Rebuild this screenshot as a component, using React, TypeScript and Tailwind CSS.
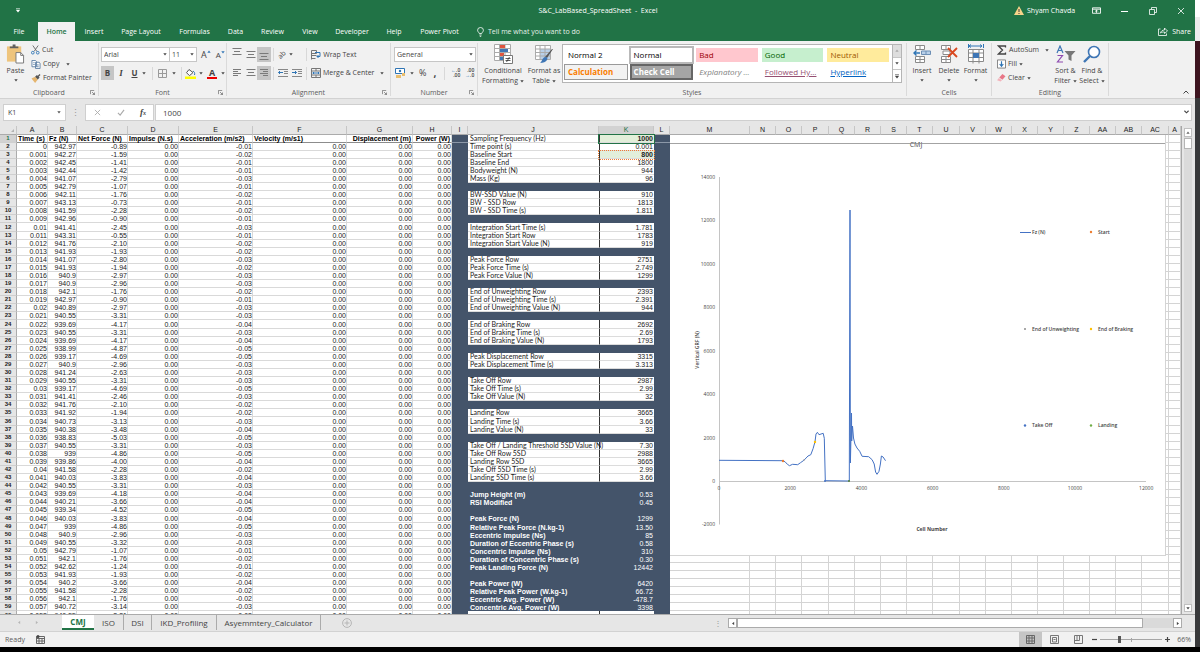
import type { ReactNode } from 'react';

const menuTabs = ['File', 'Home', 'Insert', 'Page Layout', 'Formulas', 'Data', 'Review', 'View', 'Developer', 'Help', 'Power Pivot'];
const tabWidths = ['w-[38px]', 'w-[37px]', 'w-[38px]', 'w-[56px]', 'w-[51px]', 'w-[31px]', 'w-[43px]', 'w-[32px]', 'w-[52px]', 'w-[32px]', 'w-[59px]'];

const sheetTabs = ['ISO', 'DSI', 'IKD_Profiling', 'Asyemmtery_Calculator'];
const sheetTabWidths = ['w-[30px]', 'w-[28px]', 'w-[65px]', 'w-[104px]'];

const columns = [
  ['A', 'w-[31px]'], ['B', 'w-[29px]'], ['C', 'w-[51px]'], ['D', 'w-[51px]'], ['E', 'w-[74px]'], ['F', 'w-[94px]'],
  ['G', 'w-[66px]'], ['H', 'w-[39px]'], ['I', 'w-[16px]'], ['J', 'w-[131px]'], ['K', 'w-[55px]'], ['L', 'w-[16px]'],
  ['M', 'w-[80px]'], ['N', 'w-[26px]'], ['O', 'w-[26px]'], ['P', 'w-[27px]'], ['Q', 'w-[26px]'], ['R', 'w-[26px]'],
  ['S', 'w-[26px]'], ['T', 'w-[26px]'], ['U', 'w-[27px]'], ['V', 'w-[26px]'], ['W', 'w-[26px]'], ['X', 'w-[26px]'],
  ['Y', 'w-[26px]'], ['Z', 'w-[26px]'], ['AA', 'w-[26px]'], ['AB', 'w-[26px]'], ['AC', 'w-[27px]'], ['A', 'w-auto'],
];
const emptyColumns = columns.slice(12).map((c, i) => c[0] + i);

// [Fz, net force] per sample
const samples: [number, number][] = [
  [942.97, -0.89], [942.27, -1.59], [942.45, -1.41], [942.44, -1.42], [941.07, -2.79], [942.79, -1.07],
  [942.11, -1.76], [943.13, -0.73], [941.59, -2.28], [942.96, -0.9], [941.41, -2.45], [943.31, -0.55],
  [941.76, -2.1], [941.93, -1.93], [941.07, -2.8], [941.93, -1.94], [940.9, -2.97], [940.9, -2.96],
  [942.1, -1.76], [942.97, -0.9], [940.89, -2.97], [940.55, -3.31], [939.69, -4.17], [940.55, -3.31],
  [939.69, -4.17], [938.99, -4.87], [939.17, -4.69], [940.9, -2.96], [941.24, -2.63], [940.55, -3.31],
  [939.17, -4.69], [941.41, -2.46], [941.76, -2.1], [941.92, -1.94], [940.73, -3.13], [940.38, -3.48],
  [938.83, -5.03], [940.55, -3.31], [939, -4.86], [939.86, -4], [941.58, -2.28], [940.03, -3.83],
  [940.55, -3.31], [939.69, -4.18], [940.21, -3.66], [939.34, -4.52], [940.03, -3.83], [939, -4.86],
  [940.9, -2.96], [940.55, -3.32], [942.79, -1.07], [942.1, -1.76], [942.62, -1.24], [941.93, -1.93],
  [940.2, -3.66], [941.58, -2.28], [942.1, -1.76], [940.72, -3.14], [940.55, -3.31],
];
const MASS = 96;

const headers = ['Time (s)', 'Fz (N)', 'Net Force (N)', 'Impulse (N.s)', 'Acceleration (m/s2)', 'Velocity (m/s1)', 'Displacement (m)', 'Power (W)'];

const summary: Record<number, [string, string]> = {
  1: ['Sampling Frequency (Hz)', '1000'],
  2: ['Time point (s)', '0.001'],
  3: ['Baseline Start', '800'],
  4: ['Baseline End', '1800'],
  5: ['Bodyweight (N)', '944'],
  6: ['Mass (Kg)', '96'],
  8: ['BW-SSD Value (N)', '910'],
  9: ['BW - SSD Row', '1813'],
  10: ['BW - SSD Time (s)', '1.811'],
  12: ['Integration Start Time (s)', '1.781'],
  13: ['Integration Start Row', '1783'],
  14: ['Integration Start Value (N)', '919'],
  16: ['Peak Force Row', '2751'],
  17: ['Peak Force Time (s)', '2.749'],
  18: ['Peak Force Value (N)', '1299'],
  20: ['End of Unweighting Row', '2393'],
  21: ['End of Unweighting Time (s)', '2.391'],
  22: ['End of Unweighting Value (N)', '944'],
  24: ['End of Braking Row', '2692'],
  25: ['End of Braking Time (s)', '2.69'],
  26: ['End of Braking Value (N)', '1793'],
  28: ['Peak Displacement Row', '3315'],
  29: ['Peak Displacement Time (s)', '3.313'],
  31: ['Take Off Row', '2987'],
  32: ['Take Off Time (s)', '2.99'],
  33: ['Take Off Value (N)', '32'],
  35: ['Landing Row', '3665'],
  36: ['Landing Time (s)', '3.66'],
  37: ['Landing Value (N)', '33'],
  39: ['Take Off / Landing Threshold 5SD Value (N)', '7.30'],
  40: ['Take Off Row 5SD', '2988'],
  41: ['Landing Row 5SD', '3665'],
  42: ['Take Off 5SD Time (s)', '2.99'],
  43: ['Landing 5SD Time (s)', '3.66'],
  45: ['Jump Height (m)', '0.53'],
  46: ['RSI Modified', '0.45'],
  48: ['Peak Force (N)', '1299'],
  49: ['Relative Peak Force (N.kg-1)', '13.50'],
  50: ['Eccentric Impulse (Ns)', '85'],
  51: ['Duration of Eccentric Phase (s)', '0.58'],
  52: ['Concentric Impulse (Ns)', '310'],
  53: ['Duration of Concentric Phase (s)', '0.30'],
  54: ['Peak Landing Force (N)', '12442'],
  56: ['Peak Power (W)', '6420'],
  57: ['Relative Peak Power (W.kg-1)', '66.72'],
  58: ['Eccentric Avg. Power (W)', '-478.7'],
  59: ['Concentric Avg. Power (W)', '3398'],
  60: ['', ''],
};

function Caret({ className = '' }: { className?: string }) {
  return (
    <svg viewBox="0 0 6 4" className={`w-[4px] h-[3px] shrink-0 ${className}`} fill="currentColor">
      <path d="M.5 0h5L3 3.500z" />
    </svg>
  );
}

function Group({ label, className, launcher, children }: { label: string, className: string, launcher?: boolean, children: ReactNode }) {
  return (
    <section className={`flex flex-col shrink-0 border-r border-[#dadada] ${className}`}>
      <div className="h-[44px] flex">{children}</div>
      <div className="relative h-[9px] text-center text-[#5c5c5c] leading-[11px]">
        {label}
        {launcher && (
          <button aria-label={`${label} settings`} className="absolute right-[3px] top-[3px]">
            <svg viewBox="0 0 6 6" className="w-[5px] h-[5px]" fill="none" stroke="#777">
              <path d="M.5 5V.5H5M2.500 2.500l3 3M5.500 3v2.500H3" />
            </svg>
          </button>
        )}
      </div>
    </section>
  );
}

function BigButton({ icon, lines, caret = 'below', className }: { icon: ReactNode, lines: string[], caret?: 'below' | 'inline', className: string }) {
  return (
    <button className={`flex flex-col items-center shrink-0 pt-px ${className}`}>
      <span className="h-[20px] mb-[2px] flex items-center">{icon}</span>
      {lines.map((line, i) => (
        <span key={line} className="flex items-center gap-[2px] leading-[10px] whitespace-nowrap">
          {line}
          {caret === 'inline' && i === lines.length - 1 && <Caret />}
        </span>
      ))}
      {caret === 'below' && <Caret className="mt-[3px]" />}
    </button>
  );
}

function Lines({ widths, top = 2 }: { widths: number[], top?: number }) {
  return (
    <svg viewBox="0 0 10 12" className="w-[10px] h-[12px]" stroke="#7a7a7a">
      {widths.map((w, i) => <path key={i} d={`M${(10 - w) / 2} ${top + i * 3 + 0.5}h${w}`} />)}
    </svg>
  );
}

function SideLines({ right }: { right?: boolean }) {
  return (
    <svg viewBox="0 0 10 10" className="w-[10px] h-[10px]" stroke="#7a7a7a">
      <path d={right ? 'M1 1.500h8M4 3.500h5M1 5.500h8M4 7.500h5' : 'M1 1.500h8M1 3.500h5M1 5.500h8M1 7.500h5'} />
    </svg>
  );
}

function Indent({ out }: { out?: boolean }) {
  return (
    <svg viewBox="0 0 10 10" className="w-[10px] h-[10px]" fill="none">
      <path d="M0 1.500h10M6 3.500h4M6 5.500h4M0 8.500h10" stroke="#888" />
      <path d={out ? 'M5 4.500H.5M2 3L.5 4.500 2 6' : 'M0 4.500h4.500M3 3L4.500 4.500 3 6'} stroke="#2f75b5" />
    </svg>
  );
}

function TitleBar() {
  return (
    <header className="bg-[#217346] text-white">
      <div className="h-[21px] flex items-center">
        <button aria-label="Customize Quick Access Toolbar" className="ml-[16px] w-[5px]">
          <svg viewBox="0 0 5 5" className="w-[4px] h-[5px]"><path d="M0 0h5v1H0zM0 2h5L2.500 5z" fill="#fff" /></svg>
        </button>
        <h1 className="flex-1 text-center font-normal whitespace-pre">S&amp;C_LabBased_SpreadSheet  -  Excel</h1>
        <div className="flex items-center -ml-[161px]">
          <svg viewBox="0 0 10 9" className="w-[10px] h-[9px]">
            <path d="M5 0l5 9H0z" fill="#f8d48a" />
            <path d="M5 3v3M5 7v1" stroke="#3b3b3b" />
          </svg>
          <span className="ml-[3px] w-[50px] whitespace-nowrap">Shyam Chavda</span>
          <button aria-label="Ribbon display options" className="ml-[15px]">
            <svg viewBox="0 0 10 8" className="w-[9px] h-[8px]" fill="none" stroke="#fff">
              <path d="M.5.5h9v6h-9zM.5 2h9M5 6V3M3.500 4.500L5 3l1.500 1.500" />
            </svg>
          </button>
          <button aria-label="Minimize" className="ml-[19px] w-[9px]">
            <svg viewBox="0 0 8 8" className="w-[8px] h-[8px]"><path d="M1 4.500h7" stroke="#fff" /></svg>
          </button>
          <button aria-label="Restore" className="ml-[20px]">
            <svg viewBox="0 0 8 8" className="w-[8px] h-[8px]" fill="none" stroke="#fff" strokeWidth="0.800"><path d="M.5 2.500h5v5h-5zM2.500 2.500v-2h5v5h-2" /></svg>
          </button>
          <button aria-label="Close" className="ml-[20px] mr-[10px]">
            <svg viewBox="0 0 8 8" className="w-[8px] h-[8px]" stroke="#fff" strokeWidth="0.800"><path d="M1 1l6 6M7 1L1 7" /></svg>
          </button>
        </div>
      </div>
      <nav className="h-[20px] pt-px flex items-center">
        {menuTabs.map((tab, i) => (
          <button
            key={tab}
            className={`h-full text-center whitespace-nowrap shrink-0 ${tabWidths[i]} ${
              tab === 'Home' ? 'bg-[#f1f1f1] text-[#217346] font-semibold' : ''
            }`}
          >
            {tab}
          </button>
        ))}
        <button className="flex items-center gap-[4px] ml-[8px] text-[#e4f0e9]">
          <svg viewBox="0 0 7 10" className="w-[7px] h-[10px]" fill="none" stroke="#fff" strokeWidth="0.8">
            <path d="M2.300 6.500C2 5.300.6 4.800.6 3.200a2.900 2.700 0 015.800 0C6.400 4.800 5 5.300 4.700 6.500zM2.400 8h2.200M2.800 9.400h1.400" />
          </svg>
          Tell me what you want to do
        </button>
        <button className="ml-auto mr-[4px] flex items-center gap-[4px]">
          <svg viewBox="0 0 10 9" className="w-[10px] h-[9px]" fill="none" stroke="#fff" strokeWidth="0.8">
            <path d="M2.500 2H.5v6.500h8V6.500M2.500 6c.5-2 2-3 4-3V1l3 3-3 2.500V5c-2 0-3 0-4 1z" />
          </svg>
          Share
        </button>
      </nav>
    </header>
  );
}

const Rule = ({ className = '' }: { className?: string }) => <span className={`w-px h-[13px] bg-[#d8d8d8] ${className}`} />;

function Ribbon() {
  return (
    <div className="h-[58px] bg-[#f1f1f1] border-b border-[#d2d2d2] pt-[2px] pb-[2px] flex text-[#444] relative">
      <Group label="Clipboard" className="w-[99px]" launcher>
        <BigButton
          className="w-[31px]"
          lines={['Paste']}
          icon={
            <svg viewBox="0 0 20 20" className="w-[19px] h-[20px]">
              <path d="M1 2h15v16H1z" fill="#eec47c" />
              <path d="M4 4V2h3V0h3v2h3v2z" fill="#5f5f5f" />
              <path d="M10.500 8.500h5l3 3v8h-8z" fill="#fff" stroke="#777" />
              <path d="M15.500 8.500v3h3" fill="none" stroke="#777" />
            </svg>
          }
        />
        <div className="flex flex-col">
          <button className="h-[14px] flex items-center gap-[2px]">
            <svg viewBox="0 0 10 10" className="w-[9px] h-[10px]" fill="none">
              <path d="M2 0l4.500 6.500M8 0L3.500 6.500" stroke="#666" />
              <circle cx="2" cy="8" r="1.500" stroke="#2f75b5" />
              <circle cx="7.500" cy="8" r="1.500" stroke="#2f75b5" />
            </svg>
            Cut
          </button>
          <button className="h-[14px] flex items-center gap-[2px]">
            <svg viewBox="0 0 10 10" className="w-[10px] h-[9px]" fill="#fff" stroke="#5b7ea3">
              <path d="M.5.5h4l1 1v6h-5zM4.500 2.500h4l1 1v6h-5z" />
              <path d="M6 5.500h2M6 7.500h2M2 3h1.500M2 5h1.500" />
            </svg>
            Copy
            <Caret className="ml-[5px]" />
          </button>
          <button className="h-[14px] flex items-center gap-[2px] whitespace-nowrap">
            <svg viewBox="0 0 10 10" className="w-[10px] h-[9px]">
              <path d="M0 5l4-2 3 3-3 4z" fill="#e5b56e" />
              <path d="M4 3l2-2 3 3-2 2zM7 2l2-2 1 1-2 2z" fill="#555" />
            </svg>
            Format Painter
          </button>
        </div>
      </Group>

      <Group label="Font" className="w-[128px]" launcher>
        <div className="pl-[2px] pt-[4px] flex flex-col gap-[4px]">
          <div className="flex items-center">
            <label className="relative flex">
              <select aria-label="Font" className="w-[69px] h-[15px] border border-[#c6c6c6] bg-white pl-[2px] appearance-none"><option>Arial</option></select>
              <Caret className="absolute right-[3px] top-[6px]" />
            </label>
            <label className="relative flex -ml-px">
              <select aria-label="Font size" className="w-[28px] h-[15px] border border-[#c6c6c6] bg-white pl-[2px] appearance-none"><option>11</option></select>
              <Caret className="absolute right-[3px] top-[6px]" />
            </label>
            <button aria-label="Increase font size" className="ml-[4px] text-[9px] leading-[13px] flex">A<Caret className="rotate-180 mt-[2px] text-[#2f75b5]" /></button>
            <button aria-label="Decrease font size" className="ml-[5px] text-[8px] leading-[14px] flex">A<Caret className="mt-[3px] text-[#2f75b5]" /></button>
          </div>
          <div className="flex items-center h-[14px]">
            <button className="w-[13px] h-[14px] bg-[#c5c5c5] font-bold text-[8px]">B</button>
            <button className="w-[14px] italic font-[Liberation_Serif] font-bold text-[9px]">I</button>
            <button className="w-[13px] underline font-bold text-[8px]">U</button>
            <Caret className="ml-[1px]" />
            <Rule className="ml-[6px]" />
            <button aria-label="Borders" className="ml-[5px] flex items-center gap-[5px]">
              <svg viewBox="0 0 9 9" className="w-[9px] h-[9px]" fill="none" stroke="#9a9a9a"><path d="M.5.5h8v8h-8zM4.500.5v8M.5 4.500h8" /></svg>
              <Caret />
            </button>
            <Rule className="ml-[5px]" />
            <button aria-label="Fill color" className="ml-[3px] flex items-center gap-[3px]">
              <svg viewBox="0 0 11 11" className="w-[11px] h-[11px]">
                <path d="M4 1.500l4 3-3.500 3.200-3-3z" fill="#fff" stroke="#555" />
                <path d="M8 3c1.500 1 2 2 1.500 4" fill="none" stroke="#2f75b5" />
                <path d="M0 8.500h11V11H0z" fill="#ff0" />
              </svg>
              <Caret />
            </button>
            <button aria-label="Font color" className="ml-[4px] flex items-center gap-[4px]">
              <span className="w-[10px] h-[11px] border-b-2 border-[#e00] font-bold text-[9px] leading-[9px]">A</span>
              <Caret />
            </button>
          </div>
        </div>
      </Group>

      <Group label="Alignment" className="w-[164px]" launcher>
        <div className="pl-[3px] pt-[4px] flex flex-col gap-[4px]">
          <div className="flex items-center h-[15px]">
            <button aria-label="Top align" className="w-[14px] h-[14px] flex justify-center"><Lines widths={[9, 6, 9]} top={0} /></button>
            <button aria-label="Middle align" className="w-[13px] flex justify-center"><Lines widths={[9, 6, 9]} /></button>
            <button aria-label="Bottom align" className="w-[14px] h-[15px] bg-[#c5c5c5] flex items-center justify-center"><Lines widths={[9, 6, 9]} top={4} /></button>
            <Rule className="ml-[2px]" />
            <button aria-label="Orientation" className="ml-[4px] flex items-center gap-[3px]">
              <span className="text-[7px] -rotate-45">ab</span>
              <Caret />
            </button>
            <Rule className="ml-[13px]" />
            <button className="ml-[4px] flex items-center gap-[2px] whitespace-nowrap">
              <svg viewBox="0 0 10 10" className="w-[10px] h-[10px]" fill="none">
                <path d="M.5.5v9M.5.5h5v3h-5M.5 5.500h5M.5 8.500h4" stroke="#777" />
                <path d="M4 2.500h5v4H6M7.500 5L6 6.500 7.500 8" stroke="#2f75b5" />
              </svg>
              Wrap Text
            </button>
          </div>
          <div className="flex items-center h-[14px]">
            <button aria-label="Align left" className="w-[14px] flex justify-center"><SideLines /></button>
            <button aria-label="Center" className="w-[13px] flex justify-center"><Lines widths={[9, 6, 9]} top={2} /></button>
            <button aria-label="Align right" className="w-[14px] h-[14px] bg-[#c5c5c5] flex items-center justify-center"><SideLines right /></button>
            <Rule className="ml-[2px]" />
            <button aria-label="Decrease indent" className="ml-[4px]"><Indent out /></button>
            <button aria-label="Increase indent" className="ml-[4px]"><Indent /></button>
            <Rule className="ml-[4px]" />
            <button className="ml-[4px] flex items-center gap-[2px] whitespace-nowrap">
              <svg viewBox="0 0 10 10" className="w-[10px] h-[10px]" fill="none">
                <path d="M.5.5h9v9h-9zM.5 3h9M.5 7h9M5 .5V3M5 7v2.500" stroke="#777" />
                <path d="M1.500 5h7M3 4L2 5l1 1M7 4l1 1-1 1" stroke="#2f75b5" />
              </svg>
              Merge &amp; Center
              <Caret className="ml-[4px]" />
            </button>
          </div>
        </div>
      </Group>

      <Group label="Number" className="w-[87px]" launcher>
        <div className="pl-[3px] pt-[4px] flex flex-col gap-[4px]">
          <label className="relative flex">
            <select aria-label="Number format" className="w-[82px] h-[15px] border border-[#c6c6c6] bg-white pl-[2px] appearance-none"><option>General</option></select>
            <Caret className="absolute right-[3px] top-[6px]" />
          </label>
          <div className="flex items-center h-[14px]">
            <button aria-label="Accounting format" className="ml-[1px] flex items-center gap-[4px]">
              <svg viewBox="0 0 11 10" className="w-[11px] h-[10px]">
                <path d="M.5.5h9v5h-9z" fill="#fff" stroke="#2f75b5" />
                <circle cx="5" cy="3" r="1.200" fill="#2f75b5" />
                <path d="M1 7h5v3H1zM7 5h3v3H7z" fill="#e8bd6d" />
              </svg>
              <Caret />
            </button>
            <button className="ml-[5px] text-[9px]">%</button>
            <button className="ml-[7px] text-[10px] font-bold">,</button>
            <Rule className="ml-[8px]" />
            <button className="ml-[4px] w-[11px] text-[5px] leading-[5px] text-right font-semibold"><span className="text-[#2f75b5]">←</span>.0<br />.00</button>
            <button className="ml-[3px] w-[11px] text-[5px] leading-[5px] text-right font-semibold">.00<br /><span className="text-[#2f75b5]">→</span>.0</button>
          </div>
        </div>
      </Group>

      <Group label="Styles" className="w-[429px]">
        <BigButton
          className="w-[50px]"
          caret="inline"
          lines={['Conditional', 'Formatting']}
          icon={
            <svg viewBox="0 0 20 20" className="w-[20px] h-[20px]">
              <path d="M1.500.5h16v16h-16zM1.500 4.500h16M1.500 8.500h16M1.500 12.500h16M6.500.5v16M12 .5v16" fill="#fff" stroke="#aaa" />
              <path d="M7 1h5v3H7zM7 9h4v3H7z" fill="#e0553f" />
              <path d="M7 5h8v3H7zM7 13h3v3H7z" fill="#3f76b5" />
              <path d="M10.500 11.500h9v8h-9z" fill="#fff" stroke="#777" />
              <path d="M12.500 14.500h5M12.500 16.500h5M16.500 13l-3 5" stroke="#333" strokeWidth=".8" />
            </svg>
          }
        />
        <BigButton
          className="w-[32px]"
          caret="inline"
          lines={['Format as', 'Table']}
          icon={
            <svg viewBox="0 0 20 20" className="w-[20px] h-[20px]">
              <path d="M1.500 1.500h15v14h-15z" fill="#fff" stroke="#aaa" />
              <path d="M6 5h10v10H6z" fill="#b9d0e8" />
              <path d="M1.500 5h15M1.500 8.500h15M1.500 12h15M6 1.500v14M11 1.500v14" stroke="#aaa" fill="none" />
              <path d="M19 5l-6 9-2-1 7-8z" fill="#555" />
              <path d="M11 13c2 0 3 1 2 3s-4 3-7 3c2-1 2-5 5-6z" fill="#3f76b5" />
            </svg>
          }
        />
        <div className="mt-[1px] h-[39px] flex-1 ml-[2px] mr-[4px] flex border border-[#b5b5b5] bg-white text-[8px]">
          <div className="flex-1 grid grid-cols-5 grid-rows-2 gap-x-[4px] gap-y-[3px] pl-[2px] pr-[3px] py-[3px] *:px-[3px] *:text-left *:whitespace-nowrap">
            <button className="text-black">Normal 2</button>
            <button className="text-black outline-2 outline-[#b9b9b9]">Normal</button>
            <button className="bg-[#ffc7ce] text-[#9c0006]">Bad</button>
            <button className="bg-[#c6efce] text-[#006100]">Good</button>
            <button className="bg-[#ffeb9c] text-[#9c5700]">Neutral</button>
            <button className="bg-[#f2f2f2] outline outline-[#9a9a9a] font-bold text-[#fa7d00]">Calculation</button>
            <button className="bg-[#a5a5a5] outline-2 -outline-offset-1 outline-[#666] font-bold text-white">Check Cell</button>
            <button className="italic text-[#7f7f7f]">Explanatory ...</button>
            <button className="underline text-[#954f72]">Followed Hy...</button>
            <button className="underline text-[#0563c1]">Hyperlink</button>
          </div>
          <div className="w-[9px] flex flex-col border-l border-[#b5b5b5] *:flex-1 *:flex *:items-center *:justify-center">
            <button aria-label="Previous styles" className="bg-[#dedede] text-[#aaa]"><Caret className="rotate-180" /></button>
            <button aria-label="Next styles" className="border-y border-[#c6c6c6]"><Caret /></button>
            <button aria-label="More styles"><svg viewBox="0 0 5 5" className="w-[4px] h-[5px]"><path d="M0 0h5v1H0zM0 2h5L2.500 5z" fill="#444" /></svg></button>
          </div>
        </div>
      </Group>

      <Group label="Cells" className="w-[85px]">
        <BigButton
          className="w-[30px]"
          lines={['Insert']}
          icon={
            <svg viewBox="0 0 18 18" className="w-[18px] h-[18px]" fill="#fff" stroke="#8a8a8a">
              <path d="M2.500.5h9v4h-9zM7 .5v4M2.500 11.500h9v6h-9zM7 11.500v6M2.500 14.500h9" />
              <path d="M8.500 6h9v3.500h-9zM13 6v3.500" fill="#b9d0e8" stroke="#6d8fb5" />
              <path d="M7 8H1M3.500 5.500L1 8l2.500 2.500" fill="none" stroke="#2f75b5" strokeWidth="1.400" />
            </svg>
          }
        />
        <BigButton
          className="w-[24px]"
          lines={['Delete']}
          icon={
            <svg viewBox="0 0 18 18" className="w-[18px] h-[18px]" fill="#fff" stroke="#8a8a8a">
              <path d="M1.500.5h9v4h-9zM6 .5v4M1.500 11.500h9v6h-9zM6 11.500v6M1.500 14.500h9M3 6h7v3.500H3z" />
              <path d="M8 3l9 9M17 3l-9 9" stroke="#d9481f" strokeWidth="1.800" />
            </svg>
          }
        />
        <BigButton
          className="w-[29px]"
          lines={['Format']}
          icon={
            <svg viewBox="0 0 18 20" className="w-[18px] h-[20px]" fill="none" stroke="#8a8a8a">
              <path d="M1.500 5.500h15v12h-15zM1.500 9h15M1.500 13.500h15M6 5.500v14M12 5.500v14" fill="#fff" />
              <path d="M6 9h6v5H6z" fill="#3f76b5" stroke="none" />
              <path d="M2 2h13M4 .5L2 2l2 1.500M13 .5L15 2l-2 1.500M1.500 0v4M16.500 0v4" stroke="#2f75b5" />
            </svg>
          }
        />
      </Group>

      <Group label="Editing" className="w-[117px]">
        <div className="w-[60px] pl-[5px] flex flex-col">
          <button className="h-[14px] flex items-center gap-[2px]">
            <svg viewBox="0 0 9 10" className="w-[10px] h-[10px]" fill="none" stroke="#444" strokeWidth="1.300"><path d="M8 2.500V1H1l4 4-4 4h7V7.500" /></svg>
            AutoSum
            <Caret className="ml-[4px]" />
          </button>
          <button className="h-[14px] flex items-center gap-[2px]">
            <svg viewBox="0 0 10 10" className="w-[9px] h-[10px]" fill="#fff">
              <path d="M.5.5h9v9h-9z" stroke="#777" /><path d="M5 2v5M3 5l2 2.500L7 5" stroke="#2f75b5" fill="none" strokeWidth="1.300" />
            </svg>
            Fill<Caret />
          </button>
          <button className="h-[14px] flex items-center gap-[2px]">
            <svg viewBox="0 0 10 9" className="w-[9px] h-[8px]"><path d="M6 0l3.500 2.500L6 6.500 2.500 4z" fill="#e87787" /><path d="M2 4.500l3.500 2.500L4 8.500 0 7z" fill="#f3b3bb" /></svg>
            Clear<Caret />
          </button>
        </div>
        <BigButton
          className="w-[27px]"
          caret="inline"
          lines={['Sort &', 'Filter']}
          icon={
            <svg viewBox="0 0 20 18" className="w-[20px] h-[18px]" fill="none">
              <path d="M1 8l3-7 3 7M2 5.500h4" stroke="#3f76b5" strokeWidth="1.200" />
              <path d="M1.500 10.500h5l-5 6.500h5.500" stroke="#8e4bb0" strokeWidth="1.200" />
              <path d="M8.500 6h11l-4 4.500V16l-3-1.500v-4z" fill="#777" />
            </svg>
          }
        />
        <BigButton
          className="w-[26px]"
          caret="inline"
          lines={['Find &', 'Select']}
          icon={
            <svg viewBox="0 0 18 18" className="w-[18px] h-[18px]" fill="#fff" stroke="#3f76b5">
              <circle cx="11" cy="7" r="5.500" strokeWidth="1.600" />
              <path d="M7 11l-6 6" strokeWidth="2.400" />
            </svg>
          }
        />
      </Group>
      <button aria-label="Collapse ribbon" className="ml-auto mr-[6px] mb-[2px] self-end">
        <svg viewBox="0 0 6 4" className="w-[6px] h-[4px]" fill="none" stroke="#444"><path d="M.5 3.500L3 1l2.500 2.500" /></svg>
      </button>
    </div>
  );
}

function FormulaBar() {
  return (
    <div className="h-[27px] bg-[#e6e6e6] flex items-center px-[3px]">
      <label className="relative flex">
        <input aria-label="Name box" defaultValue="K1" className="w-[63px] h-[17px] border border-[#cfcfcf] bg-white pl-[4px] text-[#444]" />
        <Caret className="absolute right-[5px] top-[7px] text-[#555]" />
      </label>
      <span className="w-[19px] text-center text-[9px] text-[#999]">⋮</span>
      <div className="w-[69px] h-[17px] border border-[#cfcfcf] bg-white flex items-center justify-between pl-[8px] pr-[7px]">
        <button aria-label="Cancel"><svg viewBox="0 0 8 8" className="w-[7px] h-[7px]" stroke="#aaa"><path d="M1 1l6 6M7 1L1 7" /></svg></button>
        <button aria-label="Enter"><svg viewBox="0 0 9 8" className="w-[8px] h-[7px]" fill="none" stroke="#aaa" strokeWidth="1.300"><path d="M1 4.500L3.500 7 8 1" /></svg></button>
        <button className="font-[Liberation_Serif] italic font-bold text-[9px] text-[#444]">f<span className="text-[6px]">x</span></button>
      </div>
      <label className="relative flex flex-1 ml-[1px]">
        <input aria-label="Formula" defaultValue="1000" className="w-full h-[17px] border border-[#cfcfcf] bg-white pl-[7px] text-[8px] text-[#444]" />
        <svg viewBox="0 0 6 4" className="absolute right-[3px] top-[6px] w-[5px] h-[4px]" fill="none" stroke="#444" strokeWidth="1.300"><path d="M.5.5L3 3 5.500.5" /></svg>
      </label>
    </div>
  );
}

const yTicks = [14000, 12000, 10000, 8000, 6000, 4000, 2000, 0, -2000];
const xTicks = [0, 2000, 4000, 6000, 8000, 10000, 12000];
const forceTrace =
  'M49 325.300L112 325.700L115 326.700L117.400 329.300L119.500 330.700L122.600 329.300L127.700 329.700L130.500 327.700L133.900 325.300L138 321L140.800 319.700' +
  'L143.200 313.300L145 306.700L146 299L147.400 297.300L149 299.700L153.200 298.300L154.300 303.300L155.300 345.700L179.300 346L180 75L180.400 328L181.500 278' +
  'L181.700 306L182.500 291L183.500 303L184.900 309L187 313L189.700 316.300L192.100 321.300L198.700 321.700L202.100 324.700L204.200 329L205.600 337L207 339.300' +
  'L209 336.300L210.400 329L211.400 321L213.100 322L215.500 325.700';

function Chart() {
  return (
    <svg viewBox="0 0 495 420" className="absolute left-[670px] top-[9px] w-[496px] h-[421px] bg-white border-r border-b border-[#d4d4d4]" fontSize="5" fill="#444">
      <text x="246" y="12" fontSize="7" textAnchor="middle">CMJ</text>
      <path d="M0 8.500H495" stroke="#8c8c8c" strokeWidth="0.800" />
      <path d="M49.500 42V389.500M49.500 346.500H476" stroke="#c4c4c4" fill="none" />
      {yTicks.map((v) => (
        <text key={v} x="45" y={348 - (v / 2000) * 43.43} textAnchor="end">{v}</text>
      ))}
      {xTicks.map((v) => (
        <text key={v} x={49 + (v / 2000) * 71.2} y="355" textAnchor="middle">{v}</text>
      ))}
      <text transform="translate(29 215) rotate(-90)" fontSize="5" fontWeight="600" textAnchor="middle">Vertical GRF (N)</text>
      <text x="262" y="396" fontSize="5" fontWeight="700" textAnchor="middle">Cell Number</text>
      <path d={forceTrace} fill="none" stroke="#4472c4" strokeWidth="1" strokeLinejoin="round" />
      <circle cx="113" cy="326" r="1.200" fill="#ed7d31" />
      <circle cx="134" cy="325" r="0.800" fill="#999" />
      <circle cx="145" cy="307" r="1.200" fill="#ffc000" />
      <circle cx="155" cy="346" r="1" fill="#4472c4" />
      <circle cx="179" cy="346" r="1" fill="#548235" />
      <g fontWeight="600">
        <path d="M350 97.500h11" stroke="#4472c4" />
        <text x="362" y="99">Fz (N)</text>
        <circle cx="421" cy="97" r="1.200" fill="#ed7d31" /><text x="428" y="99">Start</text>
        <circle cx="355" cy="194" r="1" fill="#8c8c8c" /><text x="362" y="196">End of Unweighting</text>
        <circle cx="421" cy="194" r="1.200" fill="#ffc000" /><text x="428" y="196">End of Braking</text>
        <circle cx="355" cy="290.500" r="1.200" fill="#4472c4" /><text x="362" y="292">Take Off</text>
        <circle cx="421" cy="290.500" r="1.200" fill="#70ad47" /><text x="428" y="292">Landing</text>
      </g>
    </svg>
  );
}

function SummaryCells({ row }: { row: number }) {
  const entry = summary[row];
  const freeze = row === 1 ? 'border-[#8c98a8]' : 'border-[#44546a]';
  if (!entry || (row > 43 && row < 60)) {
    return (
      <>
        <td className="bg-[#44546a]" />
        <td className="bg-[#44546a] text-white font-bold pl-[2px]">{entry?.[0]}</td>
        <td className="bg-[#44546a] text-white text-right pr-px">{entry?.[1]}</td>
        <td className="bg-[#44546a]" />
      </>
    );
  }
  const input = row === 1 || row === 3;
  return (
    <>
      <td className={`bg-[#44546a] border-b ${freeze}`} />
      <td className="border-b border-[#dcdcdc] pl-[2px] font-[Lato,sans-serif]">{entry[0]}</td>
      <td
        className={`text-right pr-px border-l border-b border-b-[#dcdcdc] border-l-[#333] ${input ? 'bg-[#e2efda] font-bold' : ''} ${
          row === 1 ? 'outline outline-[#217346]' : ''
        } ${row === 3 ? 'outline-1 outline-dotted outline-[#ed7d31]' : ''}`}
      >
        {entry[1]}
      </td>
      <td className={`bg-[#44546a] border-b ${freeze}`} />
    </>
  );
}

function Sheet() {
  return (
    <div className="flex-1 min-w-0 relative overflow-hidden bg-white border-r border-[#a6a6a6]">
      <table className="w-full table-fixed border-separate border-spacing-0 font-[Liberation_Sans,sans-serif] text-[7px] text-[#222]">
        <colgroup>
          <col className="w-[17px]" />
          {columns.map(([name, width], i) => <col key={name + i} className={width} />)}
        </colgroup>
        <thead>
          <tr className="*:h-[9px] *:leading-[8px] *:font-normal *:border-b *:border-r *:border-b-[#ababab] *:border-r-[#c6c6c6]">
            <th className="bg-[#e6e6e6]"><svg viewBox="0 0 4 4" className="w-[3px] h-[3px] ml-auto mr-[2px]"><path d="M4 0v4H0z" fill="#b2b2b2" /></svg></th>
            {columns.map(([name], i) => (
              <th key={name + i} className={i === 10 ? 'bg-[#d2d2d2] text-[#217346]' : 'bg-[#e6e6e6] text-[#222]'}>{name}</th>
            ))}
          </tr>
        </thead>
        <tbody>
          {Array.from({ length: 60 }, (_, i) => i + 1).map((row) => {
            const sample = samples[row - 2];
            const values = sample && [
              String((row - 2) / 1000), String(sample[0]), sample[1].toFixed(2), '0.00', (sample[1] / MASS).toFixed(2), '0.00', '0.00', '0.00',
            ];
            return (
              <tr key={row} className={`*:leading-[7px] *:whitespace-nowrap ${row % 12 === 0 ? '*:h-[9px]' : '*:h-[8px]'}`}>
                <th className={`border-b border-r border-b-[#cfcfcf] border-r-[#ababab] text-[6px] text-center ${row === 1 ? 'bg-[#d2d2d2] text-[#217346]' : 'bg-[#e6e6e6]'}`}>
                  {row}
                </th>
                {values
                  ? values.map((v, c) => <td key={c} className="border-b border-r border-[#d9d9d9] text-right">{v}</td>)
                  : headers.map((h, c) => (
                      <th key={h} className={`border-b border-r border-b-[#8c8c8c] border-r-[#d9d9d9] font-bold text-black ${c > 5 ? 'text-right pr-px' : 'text-left pl-px'}`}>
                        {h}
                      </th>
                    ))}
                <SummaryCells row={row} />
                {emptyColumns.map((c) => <td key={c} className="border-b border-r border-[#d4d4d4]" />)}
              </tr>
            );
          })}
        </tbody>
      </table>
      <Chart />
    </div>
  );
}

function VerticalScroll() {
  return (
    <div className="w-[13px] bg-[#e6e6e6] pl-[2px] pr-[3px] pt-[2px] pb-[2px] flex flex-col">
      <button aria-label="Scroll up" className="h-[9px] bg-white border border-[#c0c0c0] flex items-center justify-center text-[#666]"><Caret className="rotate-180" /></button>
      <div className="flex-1 bg-[#dadada]"><div className="h-[11px] mt-px bg-white border border-[#b5b5b5]" /></div>
      <button aria-label="Scroll down" className="h-[8px] bg-white border border-[#c0c0c0] flex items-center justify-center text-[#444]"><Caret /></button>
    </div>
  );
}

function SheetTabs() {
  return (
    <div className="h-[17px] bg-[#e6e6e6] border-t border-[#ababab] flex items-start text-[8px] text-[#444]">
      <div className="w-[62px] h-[15px] flex items-center gap-[14px] pl-[17px] text-[#b5b5b5]">
        <button aria-label="Previous sheet"><Caret className="rotate-90" /></button>
        <button aria-label="Next sheet"><Caret className="-rotate-90" /></button>
      </div>
      <button className="w-[32px] h-[15px] bg-white border-b-2 border-[#217346] text-[#217346] font-bold leading-[13px]">CMJ</button>
      {sheetTabs.map((name, i) => (
        <button key={name} className={`h-[15px] leading-[15px] text-center border-r border-[#ababab] ${sheetTabWidths[i]}`}>{name}</button>
      ))}
      <button aria-label="New sheet" className="ml-[21px] mt-[3px]">
        <svg viewBox="0 0 10 10" className="w-[10px] h-[10px]" fill="none" stroke="#b5b5b5"><circle cx="5" cy="5" r="4.400" /><path d="M5 2.500v5M2.500 5h5" /></svg>
      </button>
      <div className="ml-auto mr-[13px] mt-[3px] h-[10px] flex items-center w-[468px]">
        <span className="w-[14px] leading-[10px] text-[#999]">⋮</span>
        <div className="flex-1 h-[10px] flex bg-[#dadada]">
          <button aria-label="Scroll left" className="w-[9px] bg-white border border-[#ababab] flex items-center justify-center"><Caret className="rotate-90" /></button>
          <div className="flex-1 mr-[30px] bg-white border border-[#ababab]" />
          <button aria-label="Scroll right" className="w-[9px] bg-white border border-[#ababab] flex items-center justify-center"><Caret className="-rotate-90" /></button>
        </div>
      </div>
    </div>
  );
}

function StatusBar() {
  return (
    <footer className="h-[16px] bg-[#f1f1f1] border-t border-[#d2d2d2] flex items-center text-[#5c5c5c]">
      <span className="pl-[5px] w-[36px]">Ready</span>
      <button aria-label="Record macro">
        <svg viewBox="0 0 9 9" className="w-[9px] h-[9px]" fill="none" stroke="#666"><path d="M.5 1.500h8v7h-8zM.5 3.500h8M.5 6h8M3 3.500v5M6 3.500v5" /><circle cx="2" cy="1.500" r="1.500" fill="#444" stroke="none" /></svg>
      </button>
      <div className="ml-auto h-full flex items-center">
        <button aria-label="Normal view" className="w-[23px] h-full bg-[#c5c5c5] flex items-center justify-center">
          <svg viewBox="0 0 9 9" className="w-[9px] h-[9px]" fill="none" stroke="#666"><path d="M.5.5h8v8h-8zM.5 3h8M.5 6h8M3 .5v8M6 .5v8" /></svg>
        </button>
        <button aria-label="Page layout view" className="w-[24px] flex justify-center">
          <svg viewBox="0 0 9 9" className="w-[9px] h-[9px]" fill="none" stroke="#777"><path d="M.5.5h8v8h-8zM2.500 2.500h4v4.500h-4zM3.500 4.500h2" /></svg>
        </button>
        <button aria-label="Page break view" className="w-[24px] flex justify-center">
          <svg viewBox="0 0 9 9" className="w-[9px] h-[9px]" fill="none" stroke="#777"><path d="M.5.5h8v8h-8zM.5 5.500h5v-5M3 .5v5" /></svg>
        </button>
        <button aria-label="Zoom out" className="ml-[2px] w-[5px] flex"><svg viewBox="0 0 5 5" className="w-[5px] h-[5px]"><path d="M0 2.500h5" stroke="#444" strokeWidth="1.200" /></svg></button>
        <label className="relative w-[62px] h-[9px] mx-[3px] flex items-center">
          <input type="range" aria-label="Zoom" min="10" max="400" defaultValue="66" className="absolute inset-0 w-full h-full opacity-0" />
          <span className="w-full h-px bg-[#a6a6a6]" />
          <span className="absolute left-[31px] h-[4px] w-px bg-[#a6a6a6]" />
          <span className="absolute left-[18px] w-[3px] h-[7px] bg-[#555]" />
        </label>
        <button aria-label="Zoom in" className="w-[5px] flex"><svg viewBox="0 0 5 5" className="w-[5px] h-[5px]"><path d="M0 2.500h5M2.500 0v5" stroke="#444" strokeWidth="1.200" /></svg></button>
        <span className="ml-[7px] mr-[4px]">66%</span>
      </div>
    </footer>
  );
}

export default function App() {
  return (
    <div className="h-screen flex flex-col overflow-hidden bg-black font-[Open_Sans,sans-serif] text-[7px] leading-[10px]">
      <div className="flex-1 min-h-0 flex">
        <main className="flex-1 min-w-0 flex flex-col bg-[#e6e6e6]">
          <TitleBar />
          <Ribbon />
          <FormulaBar />
          <div className="flex-1 min-h-0 flex">
            <Sheet />
            <VerticalScroll />
          </div>
          <SheetTabs />
          <StatusBar />
        </main>
        <div className="w-[5px] flex flex-col">
          <div className="h-[17px] bg-white" />
          <div className="h-[24px] bg-[#ececec]" />
          <div className="h-[57px] bg-[#3d1420]" />
          <div className="flex-1 bg-[#38393b]" />
        </div>
      </div>
      <div className="h-[5px] bg-black" />
    </div>
  );
}
